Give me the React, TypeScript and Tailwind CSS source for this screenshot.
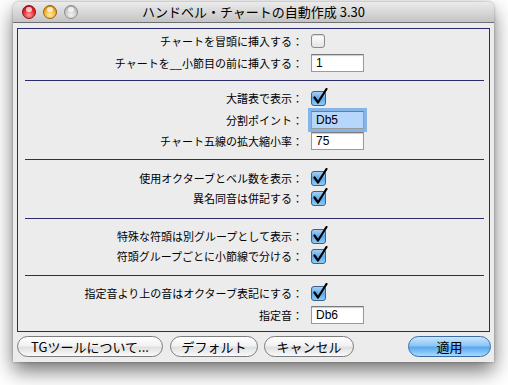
import React from 'react';

const jp = { fontFamily: '"Noto Sans CJK JP", "Noto Sans", sans-serif' };

function Light({ color }: { color: 'red' | 'yellow' | 'gray' }) {
  const bg =
    color === 'red'
      ? 'bg-[radial-gradient(circle_at_50%_75%,#ff9a9a_0%,#e8262d_55%,#a40d12_100%)] border-[#8a1016]'
      : color === 'yellow'
      ? 'bg-[radial-gradient(circle_at_50%_75%,#ffe9a0_0%,#f0b32e_55%,#b06f0c_100%)] border-[#95620f]'
      : 'bg-[radial-gradient(circle_at_50%_75%,#f2f2f2_0%,#c9c9c9_55%,#9a9a9a_100%)] border-[#8c8c8c]';
  return (
    <div className={`relative h-[14px] w-[14px] rounded-full border ${bg}`}>
      <div className="absolute left-[3px] top-[1px] h-[5px] w-[6px] rounded-full bg-white/70" />
    </div>
  );
}

function Checkbox({ checked }: { checked: boolean }) {
  if (!checked) {
    return (
      <div className="h-[14px] w-[14px] rounded-[3px] border border-[#8a8a8a] bg-[linear-gradient(#ffffff,#e4e4e4)] shadow-[inset_0_1px_1px_rgba(0,0,0,0.15)]" />
    );
  }
  return (
    <svg width="18" height="18" viewBox="0 0 18 18" className="-mt-[3px]">
      <defs>
        <linearGradient id="cb" x1="0" y1="0" x2="0" y2="1">
          <stop offset="0" stopColor="#a9d4f7" />
          <stop offset="0.5" stopColor="#5fa9ea" />
          <stop offset="1" stopColor="#8fd0fb" />
        </linearGradient>
      </defs>
      <rect x="0.5" y="3.5" width="14" height="14" rx="2.5" fill="url(#cb)" stroke="#3d5f88" />
      <path d="M3.5 9.5 L7 14.5 L15.5 1" fill="none" stroke="#000" strokeWidth="2.2" strokeLinecap="round" strokeLinejoin="round" />
    </svg>
  );
}

function Field({ value, focused }: { value: string; focused?: boolean }) {
  return (
    <div
      className={`flex h-[18px] w-[53px] items-center border border-[#9a9a9a] border-t-[#7a7a7a] pl-[4px] text-[12px] text-black ${
        focused ? 'bg-[#b6d6fb] shadow-[0_0_0_3px_#86b4e6]' : 'bg-white shadow-[inset_0_1px_1px_rgba(0,0,0,0.2)]'
      }`}
      style={{ fontFamily: '"Liberation Sans", Arial, sans-serif' }}
    >
      {value}
    </div>
  );
}

function Row({ label, children, mt }: { label: string; children: React.ReactNode; mt: string }) {
  return (
    <div className={`flex h-[20px] items-center ${mt}`}>
      <div className="w-[285px] text-right text-[11px] leading-none text-black" style={jp}>
        {label}
      </div>
      <div className="ml-[8px] flex items-center">{children}</div>
    </div>
  );
}

function Sep({ mt }: { mt: string }) {
  return <div className={`ml-[7px] mr-[5px] h-px bg-[#2b2b6e] ${mt}`} />;
}

function Btn({ label, w, blue }: { label: string; w: string; blue?: boolean }) {
  return (
    <div
      className={`flex h-[21px] ${w} items-center justify-center rounded-full border text-[13px] text-black ${
        blue
          ? 'border-[#3c6ba3] bg-[linear-gradient(#c9e6ff_0%,#8cc6f6_45%,#5aa8ee_55%,#a6dcff_100%)]'
          : 'border-[#7c7c7c] bg-[linear-gradient(#ffffff_0%,#f2f2f2_45%,#e0e0e0_55%,#fafafa_100%)]'
      }`}
      style={jp}
    >
      {label}
    </div>
  );
}

export default function App() {
  return (
    <div className="h-[385px] w-[508px] bg-white pl-[13px] pt-[2px]">
      <div className="flex h-[360px] w-[481px] flex-col rounded-t-[6px] bg-[#ececec] shadow-[0_9px_20px_rgba(0,0,0,0.55),0_0_3px_rgba(0,0,0,0.3)]">
        <div className="relative flex h-[21px] items-center rounded-t-[6px] border-b border-[#6f6f6f] bg-[linear-gradient(#ebebeb,#c4c4c4)]">
          <div className="flex gap-[7px] pl-[9px]">
            <Light color="red" />
            <Light color="yellow" />
            <Light color="gray" />
          </div>
          <div className="absolute inset-0 flex items-center justify-center text-[13px] text-black" style={jp}>
            ハンドベル・チャートの自動作成 3.30
          </div>
        </div>

        <div className="mx-[4px] mt-[5px] flex h-[304px] flex-col border border-[#2b2b6e]">
          <Row label="チャートを冒頭に挿入する：" mt="mt-[2px]">
            <Checkbox checked={false} />
          </Row>
          <Row label="チャートを__小節目の前に挿入する：" mt="mt-[2px]">
            <Field value="1" />
          </Row>
          <Sep mt="mt-[7px]" />
          <Row label="大譜表で表示：" mt="mt-[7px]">
            <Checkbox checked />
          </Row>
          <Row label="分割ポイント：" mt="mt-[2px]">
            <Field value="Db5" focused />
          </Row>
          <Row label="チャート五線の拡大縮小率：" mt="mt-[1px]">
            <Field value="75" />
          </Row>
          <Sep mt="mt-[8px]" />
          <Row label="使用オクターブとベル数を表示：" mt="mt-[8px]">
            <Checkbox checked />
          </Row>
          <Row label="異名同音は併記する：" mt="mt-0">
            <Checkbox checked />
          </Row>
          <Sep mt="mt-[10px]" />
          <Row label="特殊な符頭は別グループとして表示：" mt="mt-[7px]">
            <Checkbox checked />
          </Row>
          <Row label="符頭グループごとに小節線で分ける：" mt="mt-0">
            <Checkbox checked />
          </Row>
          <Sep mt="mt-[9px]" />
          <Row label="指定音より上の音はオクターブ表記にする：" mt="mt-[7px]">
            <Checkbox checked />
          </Row>
          <Row label="指定音：" mt="mt-[2px]">
            <Field value="Db6" />
          </Row>
        </div>

        <div className="mt-[4px] flex items-center pl-[4px] pr-[3px]">
          <Btn label="TGツールについて..." w="w-[146px]" />
          <div className="ml-[7px]">
            <Btn label="デフォルト" w="w-[88px]" />
          </div>
          <div className="ml-[6px]">
            <Btn label="キャンセル" w="w-[90px]" />
          </div>
          <div className="ml-auto">
            <Btn label="適用" w="w-[83px]" blue />
          </div>
        </div>
      </div>
    </div>
  );
}
